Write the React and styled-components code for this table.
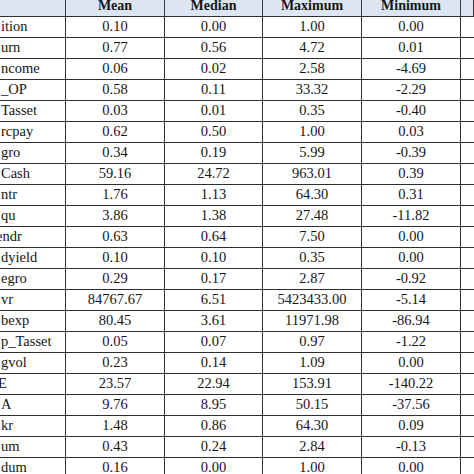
import React from "react";
import styled, { createGlobalStyle } from "styled-components";

const GlobalStyle = createGlobalStyle`
  html, body {
    margin: 0;
    padding: 0;
    background: #fff;
    overflow: hidden;
  }
`;

const rows = [
  ["ition", "0.10", "0.00", "1.00", "0.00"],
  ["urn", "0.77", "0.56", "4.72", "0.01"],
  ["ncome", "0.06", "0.02", "2.58", "-4.69"],
  ["_OP", "0.58", "0.11", "33.32", "-2.29"],
  ["Tasset", "0.03", "0.01", "0.35", "-0.40"],
  ["rcpay", "0.62", "0.50", "1.00", "0.03"],
  ["gro", "0.34", "0.19", "5.99", "-0.39"],
  ["Cash", "59.16", "24.72", "963.01", "0.39"],
  ["ntr", "1.76", "1.13", "64.30", "0.31"],
  ["qu", "3.86", "1.38", "27.48", "-11.82"],
  ["endr", "0.63", "0.64", "7.50", "0.00", 5],
  ["dyield", "0.10", "0.10", "0.35", "0.00"],
  ["egro", "0.29", "0.17", "2.87", "-0.92"],
  ["vr", "84767.67", "6.51", "5423433.00", "-5.14"],
  ["bexp", "80.45", "3.61", "11971.98", "-86.94"],
  ["p_Tasset", "0.05", "0.07", "0.97", "-1.22"],
  ["gvol", "0.23", "0.14", "1.09", "0.00"],
  ["E", "23.57", "22.94", "153.91", "-140.22", 3],
  ["A", "9.76", "8.95", "50.15", "-37.56"],
  ["kr", "1.48", "0.86", "64.30", "0.09"],
  ["um", "0.43", "0.24", "2.84", "-0.13"],
  ["dum", "0.16", "0.00", "1.00", "0.00"],
];

const headers = ["Mean", "Median", "Maximum", "Minimum"];

const Table = styled.div`
  display: grid;
  grid-template-columns: 66px 99px 98px 99px 99px 1fr;
  width: 474px;
  font-family: "Liberation Serif", "Times New Roman", serif;
  color: #161616;
`;

const HeadCell = styled.div`
  height: 16px;
  background: #dce6f2;
  border-right: 1px solid #3a3a3a;
  border-bottom: 1px solid #2e2e2e;
  font-size: 14px;
  font-weight: bold;
  line-height: 11px;
  text-align: center;
  overflow: hidden;
  &:last-child {
    border-right: none;
  }
`;

const Cell = styled.div`
  height: 18px;
  padding-bottom: 2px;
  border-right: 1px solid #2e2e2e;
  border-bottom: 1px solid #2e2e2e;
  font-size: 14.5px;
  line-height: 18px;
  text-align: center;
  white-space: nowrap;
  overflow: hidden;
`;

const LabelCell = styled(Cell)`
  text-align: left;
  padding-left: 1px;
  text-indent: ${(p) => -(p.$shift || 0)}px;
`;

const EdgeCell = styled(Cell)`
  border-right: none;
`;

export default function App() {
  return (
    <>
      <GlobalStyle />
      <Table>
        <HeadCell />
        {headers.map((h) => (
          <HeadCell key={h}>{h}</HeadCell>
        ))}
        <HeadCell />
        {rows.map(([label, mean, median, max, min, shift]) => (
          <React.Fragment key={label}>
            <LabelCell $shift={shift}>{label}</LabelCell>
            <Cell>{mean}</Cell>
            <Cell>{median}</Cell>
            <Cell>{max}</Cell>
            <Cell>{min}</Cell>
            <EdgeCell />
          </React.Fragment>
        ))}
      </Table>
    </>
  );
}
